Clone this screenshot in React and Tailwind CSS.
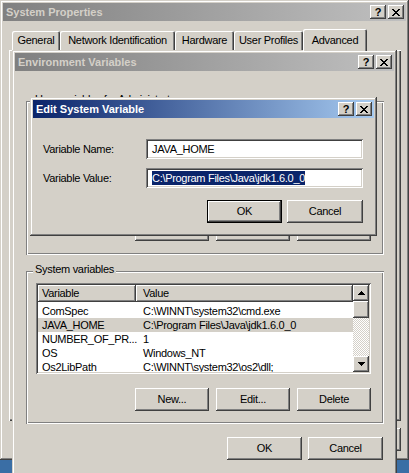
import React from "react";

function CloseGlyph() {
  return (
    <svg width="8" height="7" viewBox="0 0 8 7" shapeRendering="crispEdges">
      <path
        d="M0 0h2v1H0zM6 0h2v1H6zM1 1h2v1H1zM5 1h2v1H5zM2 2h4v1H2zM3 3h2v1H3zM2 4h4v1H2zM1 5h2v1H1zM5 5h2v1H5zM0 6h2v1H0zM6 6h2v1H6z"
        fill="#000"
      />
    </svg>
  );
}

function Arrow({ down }) {
  return (
    <svg width="7" height="4" viewBox="0 0 7 4" shapeRendering="crispEdges">
      {down ? (
        <path d="M0 0h7v1H0zM1 1h5v1H1zM2 2h3v1H2zM3 3h1v1H3z" fill="#000" />
      ) : (
        <path d="M3 0h1v1H3zM2 1h3v1H2zM1 2h5v1H1zM0 3h7v1H0z" fill="#000" />
      )}
    </svg>
  );
}

function CapBtn({ children }) {
  return (
    <div className="flex h-[14px] w-[16px] items-center justify-center bg-[#d4d0c8] pt-[1px] shadow-[inset_-1px_-1px_0_#404040,inset_1px_1px_0_#fff,inset_-2px_-2px_0_#808080,inset_2px_2px_0_#d4d0c8]">
      {children}
    </div>
  );
}

function TitleBar({ title, active }) {
  return (
    <div
      className={
        active
          ? "flex h-[18px] shrink-0 items-center justify-between bg-[linear-gradient(to_right,#0a246a,#a6caf0)] pl-[3px] pr-[2px] text-white"
          : "flex h-[18px] shrink-0 items-center justify-between bg-[linear-gradient(to_right,#808080,#c0c0c0)] pl-[3px] pr-[2px] text-[#d4d0c8]"
      }
    >
      <span className="text-[11px] font-bold leading-none tracking-normal">{title}</span>
      <div className="flex gap-[2px]">
        <CapBtn>
          <span className="text-[11px] font-bold leading-none tracking-normal text-black">?</span>
        </CapBtn>
        <CapBtn>
          <CloseGlyph />
        </CapBtn>
      </div>
    </div>
  );
}

function Btn({ children, className }) {
  return (
    <div
      className={
        "flex h-[23px] items-center justify-center bg-[#d4d0c8] shadow-[inset_-1px_-1px_0_#404040,inset_1px_1px_0_#fff,inset_-2px_-2px_0_#808080,inset_2px_2px_0_#d4d0c8] " +
        className
      }
    >
      {children}
    </div>
  );
}

function DefBtn({ children, className }) {
  return (
    <div className={"h-[23px] border border-black " + className}>
      <div className="flex h-full w-full items-center justify-center bg-[#d4d0c8] shadow-[inset_-1px_-1px_0_#404040,inset_1px_1px_0_#fff,inset_-2px_-2px_0_#808080,inset_2px_2px_0_#d4d0c8]">
        {children}
      </div>
    </div>
  );
}

function Tab({ children, className }) {
  return (
    <div
      className={
        "flex h-[19px] items-center justify-center rounded-t-[2px] shadow-[inset_1px_1px_0_#fff,inset_-1px_0_0_#404040,inset_-2px_0_0_#808080] " +
        className
      }
    >
      {children}
    </div>
  );
}

const rows = [
  ["ComSpec", "C:\\WINNT\\system32\\cmd.exe"],
  ["JAVA_HOME", "C:\\Program Files\\Java\\jdk1.6.0_0", true],
  ["NUMBER_OF_PR...", "1"],
  ["OS", "Windows_NT"],
  ["Os2LibPath", "C:\\WINNT\\system32\\os2\\dll;"],
];

function ListView({ data }) {
  return (
    <div className="ml-[10px] mt-[12px] flex h-[91px] w-[335px] bg-white p-[2px] shadow-[inset_1px_1px_0_#808080,inset_-1px_-1px_0_#fff,inset_2px_2px_0_#404040,inset_-2px_-2px_0_#d4d0c8]">
      <div className="flex min-w-0 flex-1 flex-col overflow-hidden">
        <div className="flex h-[17px] shrink-0">
          <div className="flex w-[98px] items-center bg-[#d4d0c8] pl-[4px] shadow-[inset_-1px_-1px_0_#404040,inset_1px_1px_0_#fff,inset_-2px_-2px_0_#808080]">
            Variable
          </div>
          <div className="flex flex-1 items-center bg-[#d4d0c8] pl-[7px] shadow-[inset_-1px_-1px_0_#404040,inset_1px_1px_0_#fff,inset_-2px_-2px_0_#808080]">
            Value
          </div>
        </div>
        <div className="mt-[2px] flex flex-col">
          {data.map(([k, v, sel]) => (
            <div
              key={k}
              className={
                sel
                  ? "flex h-[14px] shrink-0 items-center whitespace-nowrap bg-[#d4d0c8]"
                  : "flex h-[14px] shrink-0 items-center whitespace-nowrap"
              }
            >
              <span className="w-[98px] shrink-0 pl-[4px]">{k}</span>
              <span className="pl-[7px]">{v}</span>
            </div>
          ))}
        </div>
      </div>
      <div className="flex w-[16px] shrink-0 flex-col">
        <div className="flex h-[16px] shrink-0 items-center justify-center bg-[#d4d0c8] shadow-[inset_-1px_-1px_0_#404040,inset_1px_1px_0_#fff,inset_-2px_-2px_0_#808080,inset_2px_2px_0_#d4d0c8]">
          <Arrow />
        </div>
        <div className="h-[17px] shrink-0 bg-[#d4d0c8] shadow-[inset_-1px_-1px_0_#404040,inset_1px_1px_0_#fff,inset_-2px_-2px_0_#808080,inset_2px_2px_0_#d4d0c8]" />
        <div className="flex-1 bg-[repeating-conic-gradient(#d4d0c8_0_25%,#ffffff_0_50%)] bg-[length:2px_2px]" />
        <div className="flex h-[16px] shrink-0 items-center justify-center bg-[#d4d0c8] shadow-[inset_-1px_-1px_0_#404040,inset_1px_1px_0_#fff,inset_-2px_-2px_0_#808080,inset_2px_2px_0_#d4d0c8]">
          <Arrow down />
        </div>
      </div>
    </div>
  );
}

function GroupBox({ label, className, children }) {
  return (
    <div
      className={
        "relative shrink-0 shadow-[inset_1px_1px_0_#808080,inset_-1px_-1px_0_#fff,inset_2px_2px_0_#fff,inset_-2px_-2px_0_#808080] " +
        className
      }
    >
      <span className="absolute -top-[8px] left-[7px] bg-[#d4d0c8] px-[2px] leading-[13px]">{label}</span>
      {children}
    </div>
  );
}

export default function App() {
  return (
    <div className="relative h-[473px] w-[409px] overflow-hidden bg-[#3a6ea5] font-['Liberation_Sans',Arial,sans-serif] text-[11px] tracking-[-0.3px] text-black">
      {/* System Properties */}
      <div className="absolute left-0 top-0 flex h-[460px] w-[409px] flex-col bg-[#d4d0c8] p-[3px] shadow-[inset_-1px_-1px_0_#404040,inset_1px_1px_0_#d4d0c8,inset_-2px_-2px_0_#808080,inset_2px_2px_0_#fff]">
        <TitleBar title="System Properties" />
        <div className="relative z-10 ml-[9px] mt-[8px] flex h-[21px] shrink-0 items-end">
          <Tab className="w-[48px]">General</Tab>
          <Tab className="w-[115px]">Network Identification</Tab>
          <Tab className="w-[59px]">Hardware</Tab>
          <Tab className="w-[69px]">User Profiles</Tab>
          <div className="-mb-[1px] flex h-[22px] w-[64px] items-start justify-center rounded-t-[2px] bg-[#d4d0c8] pt-[3px] shadow-[inset_1px_1px_0_#fff,inset_-1px_0_0_#404040,inset_-2px_0_0_#808080]">
            Advanced
          </div>
        </div>
        <div className="ml-[6px] mr-[5px] h-[371px] shrink-0 shadow-[inset_1px_1px_0_#fff,inset_-1px_-1px_0_#404040,inset_-2px_-2px_0_#808080]" />
        <div className="mr-[5px] mt-[7px] flex justify-end gap-[6px]">
          <Btn className="w-[75px]" />
          <Btn className="w-[75px]" />
          <Btn className="w-[75px]" />
        </div>
      </div>

      {/* Environment Variables */}
      <div className="absolute left-[12px] top-[50px] flex h-[430px] w-[385px] flex-col bg-[#d4d0c8] p-[3px] shadow-[inset_-1px_-1px_0_#404040,inset_1px_1px_0_#d4d0c8,inset_-2px_-2px_0_#808080,inset_2px_2px_0_#fff]">
        <TitleBar title="Environment Variables" />
        <GroupBox label="User variables for Administrator" className="ml-[11px] mt-[30px] h-[154px] w-[358px]">
          <ListView data={[]} />
          <div className="ml-[109px] mt-[14px] flex gap-[7px]">
            <Btn className="w-[74px]">New...</Btn>
            <Btn className="w-[74px]">Edit...</Btn>
            <Btn className="w-[74px]">Delete</Btn>
          </div>
        </GroupBox>
        <GroupBox label="System variables" className="ml-[11px] mt-[16px] h-[153px] w-[358px]">
          <ListView data={rows} />
          <div className="ml-[109px] mt-[14px] flex gap-[7px]">
            <Btn className="w-[74px]">New...</Btn>
            <Btn className="w-[74px]">Edit...</Btn>
            <Btn className="w-[74px]">Delete</Btn>
          </div>
        </GroupBox>
        <div className="mr-[11px] mt-[13px] flex justify-end gap-[6px]">
          <Btn className="w-[75px]">OK</Btn>
          <Btn className="w-[75px]">Cancel</Btn>
        </div>
      </div>

      {/* Edit System Variable */}
      <div className="absolute left-[30px] top-[97px] flex h-[139px] w-[347px] flex-col bg-[#d4d0c8] p-[3px] shadow-[inset_-1px_-1px_0_#404040,inset_1px_1px_0_#d4d0c8,inset_-2px_-2px_0_#808080,inset_2px_2px_0_#fff]">
        <TitleBar title="Edit System Variable" active />
        <div className="mt-[21px] flex items-center">
          <span className="w-[113px] shrink-0 pl-[10px]">Variable Name:</span>
          <div className="flex h-[20px] w-[217px] items-center bg-white pl-[6px] shadow-[inset_1px_1px_0_#808080,inset_-1px_-1px_0_#fff,inset_2px_2px_0_#404040,inset_-2px_-2px_0_#d4d0c8]">
            JAVA_HOME
          </div>
        </div>
        <div className="mt-[9px] flex items-center">
          <span className="w-[113px] shrink-0 pl-[10px]">Variable Value:</span>
          <div className="flex h-[20px] w-[217px] items-center bg-white pl-[6px] shadow-[inset_1px_1px_0_#808080,inset_-1px_-1px_0_#fff,inset_2px_2px_0_#404040,inset_-2px_-2px_0_#d4d0c8]">
            <span className="bg-[#0a246a] leading-[14px] text-white">{"C:\\Program Files\\Java\\jdk1.6.0_0"}</span>
          </div>
        </div>
        <div className="mt-[12px] flex justify-end gap-[5px] pr-[11px]">
          <DefBtn className="w-[75px]">OK</DefBtn>
          <Btn className="w-[76px]">Cancel</Btn>
        </div>
      </div>
    </div>
  );
}
